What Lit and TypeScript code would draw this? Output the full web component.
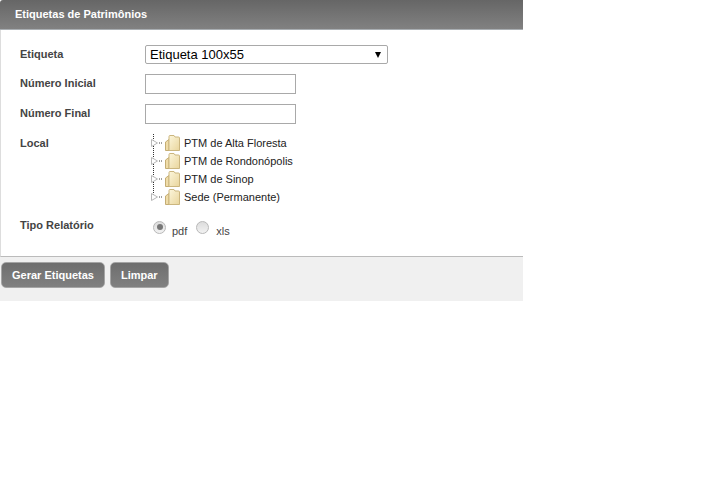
import { LitElement, html, css, svg } from 'lit';
import { customElement } from 'lit/decorators.js';

const FOLDERS = ['PTM de Alta Floresta', 'PTM de Rondonópolis', 'PTM de Sinop', 'Sede (Permanente)'];

const folderIcon = svg`
    <svg class="folder" width="15" height="16" viewBox="0 0 15 16">
        <defs>
            <linearGradient id="fold" x1="0" y1="0" x2="1" y2="1">
                <stop offset="0" stop-color="#fcf6dc"/>
                <stop offset="1" stop-color="#e9d59c"/>
            </linearGradient>
        </defs>
        <path d="M.5 15.5 L.5 7 L4 4.5 L4 15.5 Z" fill="#efdca8" stroke="#c4ad74" stroke-width="1"/>
        <path d="M4 15.5 L4 1.5 Q4 .5 5 .5 L9 .5 L10 2 L13.5 2 Q14.5 2 14.5 3 L14.5 15.5 Z" fill="url(#fold)" stroke="#cbb67f" stroke-width="1"/>
    </svg>`;

@customElement('app-root')
export class AppRoot extends LitElement {
    static styles = css`
        :host {
            display: block;
            width: 523px;
            font-family: "Liberation Sans", Arial, sans-serif;
            font-size: 11px;
            color: #333;
        }
        .header {
            height: 28px;
            box-sizing: content-box;
            padding: 0 0 1px 15px;
            display: flex;
            align-items: center;
            border-top-left-radius: 3px;
            border-bottom: 1px solid #a9aeb2;
            background: linear-gradient(#666666, #818181);
            color: #fff;
            font-weight: bold;
            font-size: 11px;
        }
        .form {
            height: 227px;
            box-sizing: border-box;
            padding: 15px 0 0 19px;
            border-left: 1px solid #ddd;
            border-bottom: 1px solid #bbb;
            display: grid;
            grid-template-columns: 125px 1fr;
            grid-template-rows: 19px 20px 20px 72px auto;
            row-gap: 10px;
        }
        .label {
            font-weight: bold;
            color: #444;
            line-height: 18px;
        }
        .select {
            width: 243px;
            height: 19px;
            box-sizing: border-box;
            border: 1px solid #a9a9a9;
            border-radius: 2px;
            display: flex;
            align-items: center;
            justify-content: space-between;
            padding: 0 6px 0 4px;
            font-size: 13px;
            color: #000;
        }
        .arrow {
            width: 0;
            height: 0;
            border-left: 3.5px solid transparent;
            border-right: 3.5px solid transparent;
            border-top: 6px solid #000;
        }
        input[type='text'] {
            width: 151px;
            height: 20px;
            box-sizing: border-box;
            margin: 0;
            border: 1px solid #a9a9a9;
            background: #fff;
            display: block;
        }
        .tree {
            list-style: none;
            margin: 0;
            padding: 0 0 0 5px;
        }
        .tree li {
            height: 18px;
            display: flex;
            align-items: center;
            color: #222;
        }
        .tree li svg.twig { flex: none; }
        .tree li .folder { margin-right: 4px; flex: none; }
        .radios {
            display: flex;
            align-items: center;
            padding: 0 0 0 8px;
            margin-top: 3px;
            height: 16px;
            color: #444;
            font-size: 11px;
        }
        .radio {
            width: 13px;
            height: 13px;
            box-sizing: border-box;
            border: 1px solid #b8b8b8;
            border-radius: 50%;
            background: linear-gradient(#dcdcdc, #f2f2f2);
            display: flex;
            align-items: center;
            justify-content: center;
            margin-right: 6px;
        }
        .radio.on::after {
            content: '';
            width: 6px;
            height: 6px;
            border-radius: 50%;
            background: #777;
        }
        .txt {
            margin-top: 8px;
            margin-right: 9px;
        }
        .radio + .txt.last {
            margin-left: 1px;
        }
        .footer {
            height: 44px;
            box-sizing: border-box;
            background: #f0f0f0;
            padding: 5px 0 0 1px;
            display: flex;
            align-items: flex-start;
            gap: 5px;
        }
        button {
            height: 26px;
            margin: 0;
            padding: 0 10px;
            border: 1px solid #a5a5a5;
            border-radius: 5px;
            background: linear-gradient(#6e6e6e, #808080);
            color: #fff;
            font-family: inherit;
            font-size: 11px;
            font-weight: bold;
        }
    `;

    private twig(last: boolean) {
        return svg`
            <svg class="twig" width="15" height="18" viewBox="0 0 15 18">
                <path d="M3.5 ${last ? '0V9' : '0V18'}" stroke="#333" stroke-dasharray="1 1" fill="none"/>
                <path d="M9 9H13" stroke="#444" stroke-dasharray="1 1" fill="none"/>
                <path d="M1.5 5.5 L7.5 9 L1.5 12.5 Z" fill="#fff" stroke="#b8b8b8"/>
            </svg>`;
    }

    render() {
        return html`
            <div class="header">Etiquetas de Patrimônios</div>
            <div class="form">
                <div class="label">Etiqueta</div>
                <div class="select"><span>Etiqueta 100x55</span><span class="arrow"></span></div>
                <div class="label">Número Inicial</div>
                <input type="text">
                <div class="label">Número Final</div>
                <input type="text">
                <div class="label">Local</div>
                <ul class="tree">
                    ${FOLDERS.map((name, i) => html`
                        <li>${this.twig(i === FOLDERS.length - 1)}${folderIcon}<span>${name}</span></li>
                    `)}
                </ul>
                <div class="label">Tipo Relatório</div>
                <div class="radios">
                    <span class="radio on"></span><span class="txt">pdf</span>
                    <span class="radio"></span><span class="txt last">xls</span>
                </div>
            </div>
            <div class="footer">
                <button>Gerar Etiquetas</button>
                <button>Limpar</button>
            </div>
        `;
    }
}
